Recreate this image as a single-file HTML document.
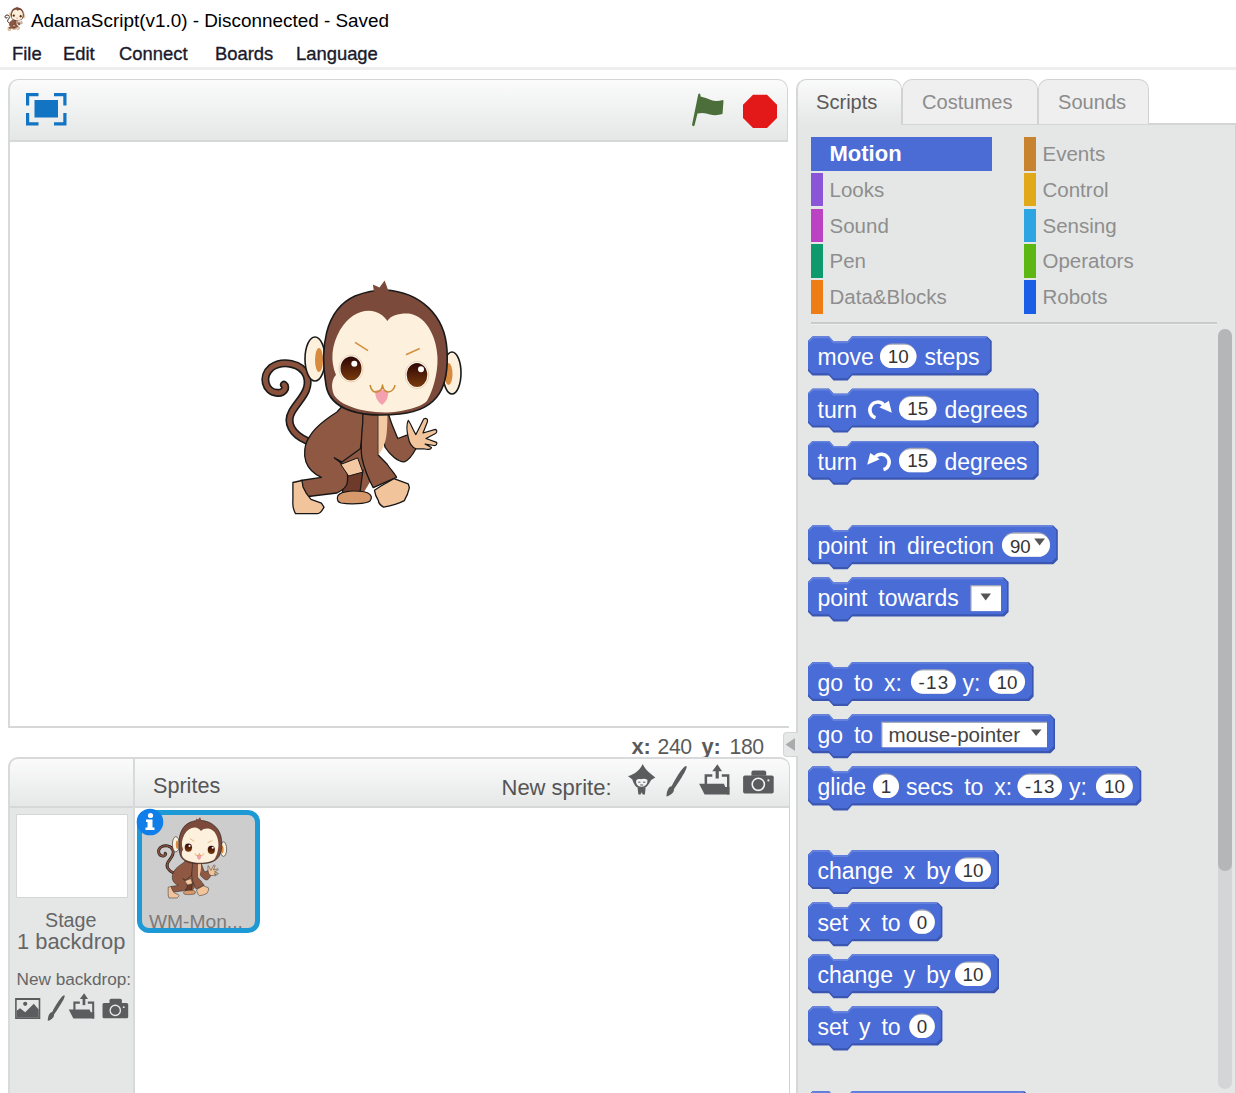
<!DOCTYPE html>
<html><head><meta charset="utf-8"><style>
*{box-sizing:border-box;margin:0;padding:0}
html,body{width:1236px;height:1093px;overflow:hidden;background:#fff;position:relative;font-family:"Liberation Sans",sans-serif}
.a{position:absolute}
.t{position:absolute;white-space:pre;line-height:1}
#title{left:31px;top:11.5px;font-size:18.9px;color:#000}
.menu{top:45.3px;font-size:18.4px;color:#1a1a2a;-webkit-text-stroke:0.35px #1a1a2a}
#menuline{left:0;top:67px;width:1236px;height:3px;background:#eeeeee}
#stbar{left:8px;top:79px;width:780px;height:63px;border:1px solid #d3d5d6;border-left:2px solid #d7d9da;border-bottom:2px solid #d5d7d8;border-radius:10px 10px 0 0;background:linear-gradient(#fbfbfb,#e5e7e7)}
#stage{left:8px;top:142px;width:781px;height:586px;border-left:2px solid #d7d9da;border-bottom:2px solid #d5d7d8;background:#fff}
.tab{top:79px;height:45px;border:1px solid #d0d2d3;border-bottom:none;border-radius:10px 10px 0 0;background:#efefef}
.tabt{top:92px;font-size:20.1px;color:#8c8c8c}
#pane{left:796px;top:123px;width:440px;height:970px;background:#e5e7e6;border-left:2px solid #d5d7d8;border-top:2px solid #d3d5d6;border-right:1px solid #cfd1d2}
.cat{font-size:20.5px;color:#8e8e8e}
#spbar{left:8px;top:757px;width:782px;height:51px;border:2px solid #d7d9da;border-right:1px solid #d3d5d6;border-bottom:none;border-radius:10px 10px 0 0;background:linear-gradient(#fbfbfb,#e5e7e7)}
#spleft{left:8px;top:806px;width:127px;height:290px;background:#e5e7e6;border-left:2px solid #d7d9da;border-right:2px solid #d7d9da;border-top:2px solid #d5d7d8}
#spright{left:135px;top:806px;width:655px;height:290px;background:#fff;border-right:1px solid #d0d2d3;border-top:2px solid #d5d7d8}
.bt{position:absolute;white-space:pre;line-height:1;font-size:23px;color:#fff;word-spacing:4.5px}
.num{position:absolute;white-space:pre;line-height:1;font-size:18px;color:#333}
</style></head><body>
<svg width="0" height="0" style="position:absolute"><defs>
<linearGradient id="eyeg" x1="0" y1="0" x2="0" y2="1"><stop offset="0" stop-color="#2e0604"/><stop offset="1" stop-color="#7a3a0c"/></linearGradient>
<symbol id="monkey" viewBox="255 275 210 245">
<g transform="translate(250,350) scale(0.1618)" stroke-linejoin="round">
<path d="M350,560 C260,520 220,450 260,380 C300,310 380,250 350,160 C320,80 200,60 130,110 C70,160 90,260 170,265 C210,268 230,230 210,215" fill="none" stroke="#1a1a1a" stroke-width="50" stroke-linecap="round"/>
<path d="M350,560 C260,520 220,450 260,380 C300,310 380,250 350,160 C320,80 200,60 130,110 C70,160 90,260 170,265 C210,268 230,230 210,215" fill="none" stroke="#8a513d" stroke-width="30" stroke-linecap="round"/>
</g>
<g stroke-linejoin="round" stroke="#161616">
<path d="M338,462 L362,436 L370,482 L364,492 L343,495 Z" fill="#8e5843" stroke="none"/>
<path d="M345,474 L363,470 L360,492 L342,495 Z" fill="#6e3b2b" stroke-width="1.2"/>
<path d="M337.5,497 C338,492 350,490 362,491.5 C371,492.5 373,497 370,501 C366,504 350,504.5 341,503 C337.5,502 337,499.5 337.5,497 Z" fill="#d7996c" stroke-width="1.2"/>
<path d="M337,412 C326,419 315,427 310,436 C304,444 303.5,455 306,462 C308.5,469 314,474 321.4,477.3 L300.7,480.5 L304,497 L337,493 C343,490 347,486 347.3,482.5 C348,478 347.5,474 347.3,472.1 C346,467 342,463 334.4,457.9 L342,462 L360.3,448.8 C362,440 362.5,432 362.8,425.5 L381,406 L346,402 Z" fill="#8e5843" stroke-width="1.3"/>
<path d="M340.8,464.4 L357.7,457.9 L362.8,472.1 L348.6,476 Z" fill="#f3c9a3" stroke-width="1"/>
<path d="M380,408 L387,410 C392,426 395,432 397.8,438.5 L408.2,434.6 L415.9,448.8 C412,456 408,461 404.3,461.8 C398,462 390,455 384.9,447 L380,408 Z" fill="#8e5843" stroke-width="1.3"/>
<path d="M362.8,408 L378.4,408 L378.4,455.3 C381,458 385,462 387,464 C391,470 395,474 396.5,477.3 L373.2,487.7 C368,478 364,468 362,458 C360.5,450 361,440 362.8,422 Z" fill="#8e5843" stroke-width="1.3"/>
<path d="M378.4,412 L387.4,412 C387.5,430 386.5,438 384.9,442.4 C383,448 381,452 378.4,455.3 Z" fill="#f3c9a3" stroke="none"/>
<path d="M408.2,420.4 C410,422 413,430 415.9,434.6 L423.7,419.1 C426,417.5 428,419 427.5,421.5 L423,433 L435.3,429.4 C437,430 437.5,432 435.5,433.5 L426,438.5 L436.6,442.4 C437.5,444 436,446 434,445.5 L425,444 L431.5,447.5 C431,449.5 428,450 424,448.8 L415.9,448.8 C411,447 409,442 408.2,437.2 C407,432 406.5,424 408.2,420.4 Z" fill="#f2c49c" stroke-width="1.2"/>
<path d="M292.9,482.5 L302,480.5 L303,487 L306,492.8 L311,499.3 L321.4,503.2 L324,507.1 C322,511 319,513.6 317.5,513.6 L295.5,513.6 C293.5,510 292.5,505 292.9,500.6 Z" fill="#f2c49c" stroke-width="1.3"/>
<path d="M374.5,490.3 L381,486 L393.9,478.6 L408.2,483.8 L409.4,487.7 C408,494 406,498 404.3,500.6 C398,504 390,506 383.6,507.1 C380,505 378.5,503 378.4,500.6 C376,497 375,494 374.5,490.3 Z" fill="#f2c49c" stroke-width="1.3"/>
</g>
<g stroke-linejoin="round">
<ellipse cx="315" cy="359" rx="10" ry="22" fill="#fdf0dc" stroke="#1a1a1a" stroke-width="1.6"/>
<ellipse cx="319" cy="360" rx="4" ry="12" fill="#d88a3e"/>
<ellipse cx="452" cy="373" rx="9" ry="21" fill="#fdf0dc" stroke="#1a1a1a" stroke-width="1.6"/>
<ellipse cx="448.5" cy="374" rx="4" ry="11" fill="#d88a3e"/>
<path d="M385,290 C420,292 445,315 447,350 C449,385 440,410 400,414 C360,418 330,410 326,385 C320,350 324,310 355,296 C365,292 375,290 385,290 Z" fill="#7b4a3a" stroke="#1a1a1a" stroke-width="1.6"/>
<polygon points="372.9,284.6 379.5,287.5 384.6,280.5 388.5,291 374,292" fill="#7b4a3a"/>
<path d="M368.8,310.8 C378,311 384,316 387.3,321 C391,315 400,313 408.7,313.5 C428,316 437,340 437.5,357.5 C438,375 432,392 428,399 C425,407 400,412.5 385,412.5 C360,412 340,405 334,395 C330,385 333,378 336,375 C330,360 331.6,345 340,330 C348,317 358,311 368.8,310.8 Z" fill="#fdf0dc"/>
<ellipse cx="351" cy="368.5" rx="12" ry="13.5" fill="#fff" stroke="#e3c39a" stroke-width="0.8"/>
<ellipse cx="351" cy="368.5" rx="10.5" ry="12" fill="url(#eyeg)"/>
<circle cx="354.3" cy="363.7" r="3" fill="#fff"/>
<ellipse cx="417" cy="375" rx="11.8" ry="13.5" fill="#fff" stroke="#e3c39a" stroke-width="0.8"/>
<ellipse cx="417" cy="375" rx="10.3" ry="12" fill="url(#eyeg)"/>
<circle cx="421" cy="369.2" r="3" fill="#fff"/>
<path d="M355,342.4 L368,350.7 M405.9,354.8 L419.7,348.6" stroke="#d49040" stroke-width="1.6"/>
<path d="M375,391 Q381,388 388,391 Q389,400 382,405 Q375,400 375,391 Z" fill="#f5a0ae"/>
<path d="M370,385 Q372,393 377,392 Q382,391 382.5,385 Q383.5,392 388.5,392 Q394,391 395,385" fill="none" stroke="#c88a30" stroke-width="1.5"/>
</g>
</symbol></defs></svg>
<svg class="a" style="left:4.2px;top:5.7px" width="21.6" height="25.2" viewBox="255 275 210 245"><use href="#monkey" x="255" y="275" width="210" height="245"/></svg>
<div class="t" id="title">AdamaScript(v1.0) - Disconnected - Saved</div>
<div class="t menu" style="left:12px">File</div>
<div class="t menu" style="left:63px">Edit</div>
<div class="t menu" style="left:119px">Connect</div>
<div class="t menu" style="left:215px">Boards</div>
<div class="t menu" style="left:296px">Language</div>
<div class="a" id="menuline"></div>
<div class="a" id="stbar"></div>
<div class="a" id="stage"></div>
<svg class="a" style="left:255px;top:275px" width="210" height="245" viewBox="255 275 210 245"><use href="#monkey" x="255" y="275" width="210" height="245"/></svg>
<svg class="a" style="left:0;top:0" width="1236" height="150">
<g fill="#1274c2">
<rect x="34.5" y="100" width="23.5" height="17.5"/>
<path d="M26,93 h12.5 v3.2 h-9.3 v9.3 h-3.2z"/>
<path d="M66.5,93 h-12.5 v3.2 h9.3 v9.3 h3.2z"/>
<path d="M26,125.5 h12.5 v-3.2 h-9.3 v-9.3 h-3.2z"/>
<path d="M66.5,125.5 h-12.5 v-3.2 h9.3 v-9.3 h3.2z"/>
</g>
<path fill="#4b6e3b" d="M692,125 L698.2,94.5 Q699.5,92.5 700.5,95 L700.5,96.5 Q706,97.5 711,100 Q716,102 723,100 L723.5,101 L722.5,114 Q716,116 710,114.5 Q704,112 697.5,113.5 L694.5,125.5 Q693,127 692,125z"/>
<polygon fill="#e31919" points="753,94.7 767,94.7 777,104.7 777,118 767,128 753,128 743,118 743,104.7"/>
</svg>
<div class="a" id="pane"></div>
<div class="a tab" style="left:902px;width:136px"></div>
<div class="a tab" style="left:1038px;width:111px"></div>
<div class="a tab" style="left:796px;width:106px;height:46px;border-left:2px solid #d5d7d8;background:linear-gradient(#fafafa,#e5e7e6)"></div>
<div class="t tabt" style="left:816px;color:#5a5a5a">Scripts</div>
<div class="t tabt" style="left:922px">Costumes</div>
<div class="t tabt" style="left:1058px">Sounds</div>
<div class="a" style="left:811px;top:137px;width:181px;height:33.5px;background:#4a6cd4"></div>
<div class="t cat" style="left:829.5px;top:142.8px;color:#fff;font-weight:bold;font-size:22px">Motion</div>
<div class="a" style="left:811px;top:172.8px;width:12px;height:33.7px;background:#8a55d7"></div>
<div class="t cat" style="left:829.5px;top:179.8px">Looks</div>
<div class="a" style="left:811px;top:208.5px;width:12px;height:33.7px;background:#bb42c3"></div>
<div class="t cat" style="left:829.5px;top:215.5px">Sound</div>
<div class="a" style="left:811px;top:244.3px;width:12px;height:33.7px;background:#0e9a6c"></div>
<div class="t cat" style="left:829.5px;top:251.3px">Pen</div>
<div class="a" style="left:811px;top:280px;width:12px;height:33.7px;background:#ee7d16"></div>
<div class="t cat" style="left:829.5px;top:287px">Data&amp;Blocks</div>
<div class="a" style="left:1024px;top:137px;width:12px;height:33.7px;background:#c88330"></div>
<div class="t cat" style="left:1042.5px;top:144px">Events</div>
<div class="a" style="left:1024px;top:172.8px;width:12px;height:33.7px;background:#e1a91a"></div>
<div class="t cat" style="left:1042.5px;top:179.8px">Control</div>
<div class="a" style="left:1024px;top:208.5px;width:12px;height:33.7px;background:#2ca5e2"></div>
<div class="t cat" style="left:1042.5px;top:215.5px">Sensing</div>
<div class="a" style="left:1024px;top:244.3px;width:12px;height:33.7px;background:#5cb712"></div>
<div class="t cat" style="left:1042.5px;top:251.3px">Operators</div>
<div class="a" style="left:1024px;top:280px;width:12px;height:33.7px;background:#1a5de6"></div>
<div class="t cat" style="left:1042.5px;top:287px">Robots</div>
<div class="a" style="left:811px;top:322px;width:406px;height:2px;background:#c9cbcb"></div>
<div class="a" style="left:811px;top:324px;width:406px;height:1px;background:#eef0f0"></div>
<div class="a" style="left:1217.7px;top:328.5px;width:14.5px;height:760.5px;border-radius:7.5px;background:#d4d5d7"></div>
<div class="a" style="left:1217.7px;top:328.5px;width:14.5px;height:542.5px;border-radius:7.5px;background:#b4b6b8"></div>
<svg class="a" style="left:0;top:0" width="1236" height="1093"><path fill="#3a56b0" d="M808,341.1 L812.5,336.6 L829,336.6 L833.5,341.6 L847.6,341.6 L852.1,336.6 L987.2,336.6 L991.7,341.1 L991.7,370.90000000000003 L987.2,375.40000000000003 L852.1,375.40000000000003 L847.6,380.40000000000003 L833.5,380.40000000000003 L829,375.40000000000003 L812.5,375.40000000000003 L808,370.90000000000003 Z"/><path fill="#4a6cd7" d="M808,341.1 L812.5,336.6 L829,336.6 L833.5,341.6 L847.6,341.6 L852.1,336.6 L985.6,336.6 L990.1,341.1 L990.1,368.70000000000005 L985.6,373.20000000000005 L852.1,373.20000000000005 L847.6,378.20000000000005 L833.5,378.20000000000005 L829,373.20000000000005 L812.5,373.20000000000005 L808,368.70000000000005 Z"/><path fill="none" stroke="#6482de" stroke-width="1.6" d="M808.8,341.6 L812.8,337.40000000000003 L829,337.40000000000003 L833.5,342.40000000000003 L847.6,342.40000000000003 L852.1,337.40000000000003 L986.2,337.40000000000003"/><rect x="880" y="343.55" width="36.5" height="24.5" rx="12.25" fill="#a7abb8"/><rect x="880" y="344.85" width="36.5" height="23.2" rx="11.6" fill="#fff"/><path fill="#3a56b0" d="M808,393.3 L812.5,388.8 L829,388.8 L833.5,393.8 L847.6,393.8 L852.1,388.8 L1034.2,388.8 L1038.7,393.3 L1038.7,423.1 L1034.2,427.6 L852.1,427.6 L847.6,432.6 L833.5,432.6 L829,427.6 L812.5,427.6 L808,423.1 Z"/><path fill="#4a6cd7" d="M808,393.3 L812.5,388.8 L829,388.8 L833.5,393.8 L847.6,393.8 L852.1,388.8 L1032.6000000000001,388.8 L1037.1000000000001,393.3 L1037.1000000000001,420.9 L1032.6000000000001,425.4 L852.1,425.4 L847.6,430.4 L833.5,430.4 L829,425.4 L812.5,425.4 L808,420.9 Z"/><path fill="none" stroke="#6482de" stroke-width="1.6" d="M808.8,393.8 L812.8,389.6 L829,389.6 L833.5,394.6 L847.6,394.6 L852.1,389.6 L1033.2,389.6"/><rect x="899" y="395.75" width="37.5" height="24.5" rx="12.25" fill="#a7abb8"/><rect x="899" y="397.05" width="37.5" height="23.2" rx="11.6" fill="#fff"/><path fill="#3a56b0" d="M808,445.4 L812.5,440.9 L829,440.9 L833.5,445.9 L847.6,445.9 L852.1,440.9 L1034.2,440.9 L1038.7,445.4 L1038.7,475.2 L1034.2,479.7 L852.1,479.7 L847.6,484.7 L833.5,484.7 L829,479.7 L812.5,479.7 L808,475.2 Z"/><path fill="#4a6cd7" d="M808,445.4 L812.5,440.9 L829,440.9 L833.5,445.9 L847.6,445.9 L852.1,440.9 L1032.6000000000001,440.9 L1037.1000000000001,445.4 L1037.1000000000001,473.0 L1032.6000000000001,477.5 L852.1,477.5 L847.6,482.5 L833.5,482.5 L829,477.5 L812.5,477.5 L808,473.0 Z"/><path fill="none" stroke="#6482de" stroke-width="1.6" d="M808.8,445.9 L812.8,441.7 L829,441.7 L833.5,446.7 L847.6,446.7 L852.1,441.7 L1033.2,441.7"/><rect x="899" y="447.84999999999997" width="37.5" height="24.5" rx="12.25" fill="#a7abb8"/><rect x="899" y="449.15" width="37.5" height="23.2" rx="11.6" fill="#fff"/><path fill="#3a56b0" d="M808,529.9 L812.5,525.4 L829,525.4 L833.5,530.4 L847.6,530.4 L852.1,525.4 L1053.3,525.4 L1057.8,529.9 L1057.8,559.6999999999999 L1053.3,564.1999999999999 L852.1,564.1999999999999 L847.6,569.1999999999999 L833.5,569.1999999999999 L829,564.1999999999999 L812.5,564.1999999999999 L808,559.6999999999999 Z"/><path fill="#4a6cd7" d="M808,529.9 L812.5,525.4 L829,525.4 L833.5,530.4 L847.6,530.4 L852.1,525.4 L1051.7,525.4 L1056.2,529.9 L1056.2,557.5 L1051.7,562.0 L852.1,562.0 L847.6,567.0 L833.5,567.0 L829,562.0 L812.5,562.0 L808,557.5 Z"/><path fill="none" stroke="#6482de" stroke-width="1.6" d="M808.8,530.4 L812.8,526.1999999999999 L829,526.1999999999999 L833.5,531.1999999999999 L847.6,531.1999999999999 L852.1,526.1999999999999 L1052.3,526.1999999999999"/><rect x="1002" y="532.35" width="48" height="24.5" rx="12.25" fill="#a7abb8"/><rect x="1002" y="533.65" width="48" height="23.2" rx="11.6" fill="#fff"/><path fill="#3a56b0" d="M808,582.1 L812.5,577.6 L829,577.6 L833.5,582.6 L847.6,582.6 L852.1,577.6 L1004.1,577.6 L1008.6,582.1 L1008.6,611.9 L1004.1,616.4 L852.1,616.4 L847.6,621.4 L833.5,621.4 L829,616.4 L812.5,616.4 L808,611.9 Z"/><path fill="#4a6cd7" d="M808,582.1 L812.5,577.6 L829,577.6 L833.5,582.6 L847.6,582.6 L852.1,577.6 L1002.5,577.6 L1007.0,582.1 L1007.0,609.7 L1002.5,614.2 L852.1,614.2 L847.6,619.2 L833.5,619.2 L829,614.2 L812.5,614.2 L808,609.7 Z"/><path fill="none" stroke="#6482de" stroke-width="1.6" d="M808.8,582.6 L812.8,578.4 L829,578.4 L833.5,583.4 L847.6,583.4 L852.1,578.4 L1003.1,578.4"/><path fill="#3a56b0" d="M808,666.7 L812.5,662.2 L829,662.2 L833.5,667.2 L847.6,667.2 L852.1,662.2 L1029.1,662.2 L1033.6,666.7 L1033.6,696.5 L1029.1,701.0 L852.1,701.0 L847.6,706.0 L833.5,706.0 L829,701.0 L812.5,701.0 L808,696.5 Z"/><path fill="#4a6cd7" d="M808,666.7 L812.5,662.2 L829,662.2 L833.5,667.2 L847.6,667.2 L852.1,662.2 L1027.5,662.2 L1032.0,666.7 L1032.0,694.3000000000001 L1027.5,698.8000000000001 L852.1,698.8000000000001 L847.6,703.8000000000001 L833.5,703.8000000000001 L829,698.8000000000001 L812.5,698.8000000000001 L808,694.3000000000001 Z"/><path fill="none" stroke="#6482de" stroke-width="1.6" d="M808.8,667.2 L812.8,663.0 L829,663.0 L833.5,668.0 L847.6,668.0 L852.1,663.0 L1028.1,663.0"/><rect x="911" y="669.1500000000001" width="44.799999999999955" height="24.5" rx="12.25" fill="#a7abb8"/><rect x="911" y="670.45" width="44.799999999999955" height="23.2" rx="11.6" fill="#fff"/><rect x="989" y="669.1500000000001" width="36" height="24.5" rx="12.25" fill="#a7abb8"/><rect x="989" y="670.45" width="36" height="23.2" rx="11.6" fill="#fff"/><path fill="#3a56b0" d="M808,718.9 L812.5,714.4 L829,714.4 L833.5,719.4 L847.6,719.4 L852.1,714.4 L1050.5,714.4 L1055,718.9 L1055,748.6999999999999 L1050.5,753.1999999999999 L852.1,753.1999999999999 L847.6,758.1999999999999 L833.5,758.1999999999999 L829,753.1999999999999 L812.5,753.1999999999999 L808,748.6999999999999 Z"/><path fill="#4a6cd7" d="M808,718.9 L812.5,714.4 L829,714.4 L833.5,719.4 L847.6,719.4 L852.1,714.4 L1048.9,714.4 L1053.4,718.9 L1053.4,746.5 L1048.9,751.0 L852.1,751.0 L847.6,756.0 L833.5,756.0 L829,751.0 L812.5,751.0 L808,746.5 Z"/><path fill="none" stroke="#6482de" stroke-width="1.6" d="M808.8,719.4 L812.8,715.1999999999999 L829,715.1999999999999 L833.5,720.1999999999999 L847.6,720.1999999999999 L852.1,715.1999999999999 L1049.5,715.1999999999999"/><path fill="#3a56b0" d="M808,771.1 L812.5,766.6 L829,766.6 L833.5,771.6 L847.6,771.6 L852.1,766.6 L1136.8,766.6 L1141.3,771.1 L1141.3,800.9 L1136.8,805.4 L852.1,805.4 L847.6,810.4 L833.5,810.4 L829,805.4 L812.5,805.4 L808,800.9 Z"/><path fill="#4a6cd7" d="M808,771.1 L812.5,766.6 L829,766.6 L833.5,771.6 L847.6,771.6 L852.1,766.6 L1135.2,766.6 L1139.7,771.1 L1139.7,798.7 L1135.2,803.2 L852.1,803.2 L847.6,808.2 L833.5,808.2 L829,803.2 L812.5,803.2 L808,798.7 Z"/><path fill="none" stroke="#6482de" stroke-width="1.6" d="M808.8,771.6 L812.8,767.4 L829,767.4 L833.5,772.4 L847.6,772.4 L852.1,767.4 L1135.8,767.4"/><rect x="873" y="773.5500000000001" width="26" height="24.5" rx="12.25" fill="#a7abb8"/><rect x="873" y="774.85" width="26" height="23.2" rx="11.6" fill="#fff"/><rect x="1017.5" y="773.5500000000001" width="44.5" height="24.5" rx="12.25" fill="#a7abb8"/><rect x="1017.5" y="774.85" width="44.5" height="23.2" rx="11.6" fill="#fff"/><rect x="1096" y="773.5500000000001" width="36.799999999999955" height="24.5" rx="12.25" fill="#a7abb8"/><rect x="1096" y="774.85" width="36.799999999999955" height="23.2" rx="11.6" fill="#fff"/><path fill="#3a56b0" d="M808,854.8 L812.5,850.3 L829,850.3 L833.5,855.3 L847.6,855.3 L852.1,850.3 L994.5,850.3 L999,854.8 L999,884.5999999999999 L994.5,889.0999999999999 L852.1,889.0999999999999 L847.6,894.0999999999999 L833.5,894.0999999999999 L829,889.0999999999999 L812.5,889.0999999999999 L808,884.5999999999999 Z"/><path fill="#4a6cd7" d="M808,854.8 L812.5,850.3 L829,850.3 L833.5,855.3 L847.6,855.3 L852.1,850.3 L992.9,850.3 L997.4,854.8 L997.4,882.4 L992.9,886.9 L852.1,886.9 L847.6,891.9 L833.5,891.9 L829,886.9 L812.5,886.9 L808,882.4 Z"/><path fill="none" stroke="#6482de" stroke-width="1.6" d="M808.8,855.3 L812.8,851.0999999999999 L829,851.0999999999999 L833.5,856.0999999999999 L847.6,856.0999999999999 L852.1,851.0999999999999 L993.5,851.0999999999999"/><rect x="955" y="857.25" width="36" height="24.5" rx="12.25" fill="#a7abb8"/><rect x="955" y="858.55" width="36" height="23.2" rx="11.6" fill="#fff"/><path fill="#3a56b0" d="M808,906.9 L812.5,902.4 L829,902.4 L833.5,907.4 L847.6,907.4 L852.1,902.4 L937.9,902.4 L942.4,906.9 L942.4,936.6999999999999 L937.9,941.1999999999999 L852.1,941.1999999999999 L847.6,946.1999999999999 L833.5,946.1999999999999 L829,941.1999999999999 L812.5,941.1999999999999 L808,936.6999999999999 Z"/><path fill="#4a6cd7" d="M808,906.9 L812.5,902.4 L829,902.4 L833.5,907.4 L847.6,907.4 L852.1,902.4 L936.3,902.4 L940.8,906.9 L940.8,934.5 L936.3,939.0 L852.1,939.0 L847.6,944.0 L833.5,944.0 L829,939.0 L812.5,939.0 L808,934.5 Z"/><path fill="none" stroke="#6482de" stroke-width="1.6" d="M808.8,907.4 L812.8,903.1999999999999 L829,903.1999999999999 L833.5,908.1999999999999 L847.6,908.1999999999999 L852.1,903.1999999999999 L936.9,903.1999999999999"/><rect x="909.3" y="909.35" width="25.5" height="24.5" rx="12.25" fill="#a7abb8"/><rect x="909.3" y="910.65" width="25.5" height="23.2" rx="11.6" fill="#fff"/><path fill="#3a56b0" d="M808,959.0 L812.5,954.5 L829,954.5 L833.5,959.5 L847.6,959.5 L852.1,954.5 L994.5,954.5 L999,959.0 L999,988.8 L994.5,993.3 L852.1,993.3 L847.6,998.3 L833.5,998.3 L829,993.3 L812.5,993.3 L808,988.8 Z"/><path fill="#4a6cd7" d="M808,959.0 L812.5,954.5 L829,954.5 L833.5,959.5 L847.6,959.5 L852.1,954.5 L992.9,954.5 L997.4,959.0 L997.4,986.6 L992.9,991.1 L852.1,991.1 L847.6,996.1 L833.5,996.1 L829,991.1 L812.5,991.1 L808,986.6 Z"/><path fill="none" stroke="#6482de" stroke-width="1.6" d="M808.8,959.5 L812.8,955.3 L829,955.3 L833.5,960.3 L847.6,960.3 L852.1,955.3 L993.5,955.3"/><rect x="955" y="961.45" width="36" height="24.5" rx="12.25" fill="#a7abb8"/><rect x="955" y="962.75" width="36" height="23.2" rx="11.6" fill="#fff"/><path fill="#3a56b0" d="M808,1011.1 L812.5,1006.6 L829,1006.6 L833.5,1011.6 L847.6,1011.6 L852.1,1006.6 L937.9,1006.6 L942.4,1011.1 L942.4,1040.9 L937.9,1045.4 L852.1,1045.4 L847.6,1050.4 L833.5,1050.4 L829,1045.4 L812.5,1045.4 L808,1040.9 Z"/><path fill="#4a6cd7" d="M808,1011.1 L812.5,1006.6 L829,1006.6 L833.5,1011.6 L847.6,1011.6 L852.1,1006.6 L936.3,1006.6 L940.8,1011.1 L940.8,1038.7 L936.3,1043.2 L852.1,1043.2 L847.6,1048.2 L833.5,1048.2 L829,1043.2 L812.5,1043.2 L808,1038.7 Z"/><path fill="none" stroke="#6482de" stroke-width="1.6" d="M808.8,1011.6 L812.8,1007.4 L829,1007.4 L833.5,1012.4 L847.6,1012.4 L852.1,1007.4 L936.9,1007.4"/><rect x="909.3" y="1013.55" width="25.5" height="24.5" rx="12.25" fill="#a7abb8"/><rect x="909.3" y="1014.8499999999999" width="25.5" height="23.2" rx="11.6" fill="#fff"/><path fill="#3a56b0" d="M808,1095.8 L812.5,1091.3 L829,1091.3 L833.5,1096.3 L847.6,1096.3 L852.1,1091.3 L1024.5,1091.3 L1029,1095.8 L1029,1125.6 L1024.5,1130.1 L852.1,1130.1 L847.6,1135.1 L833.5,1135.1 L829,1130.1 L812.5,1130.1 L808,1125.6 Z"/><path fill="#4a6cd7" d="M808,1095.8 L812.5,1091.3 L829,1091.3 L833.5,1096.3 L847.6,1096.3 L852.1,1091.3 L1022.9,1091.3 L1027.4,1095.8 L1027.4,1123.3999999999999 L1022.9,1127.8999999999999 L852.1,1127.8999999999999 L847.6,1132.8999999999999 L833.5,1132.8999999999999 L829,1127.8999999999999 L812.5,1127.8999999999999 L808,1123.3999999999999 Z"/><path fill="none" stroke="#6482de" stroke-width="1.6" d="M808.8,1096.3 L812.8,1092.1 L829,1092.1 L833.5,1097.1 L847.6,1097.1 L852.1,1092.1 L1023.5,1092.1"/><polygon fill="#555" points="1034.2,538.6 1045,538.6 1039.6,545.4"/><rect x="970.4" y="585.1" width="30.6" height="26" fill="#a9adb9"/><rect x="971.6" y="586.4" width="29.4" height="24.7" fill="#fff"/><polygon fill="#555" points="980.5,593.6 991,593.6 985.7,600.6"/><rect x="881.3" y="721.6999999999999" width="165.7" height="25.5" fill="#a9adb9"/><rect x="882.5" y="723.0" width="164.5" height="24.2" fill="#fff"/><polygon fill="#555" points="1031,729.4 1041.5,729.4 1036.2,735.9"/><path d="M875.52,417.59 A7.9,7.9 0 1 1 883.57,404.71" fill="none" stroke="#fff" stroke-width="3.5"/><polygon fill="#fff" points="879.3,407.2 888.8,400.8 891.8,412.7"/><g transform="translate(1759,0) scale(-1,1)"><path d="M875.52,469.69 A7.9,7.9 0 1 1 883.57,456.81" fill="none" stroke="#fff" stroke-width="3.5"/><polygon fill="#fff" points="879.3,459.29999999999995 888.8,452.9 891.8,464.79999999999995"/></g></svg>
<div class="bt" style="left:817.5px;top:346.40000000000003px">move</div><div class="num" style="left:880px;width:36.5px;text-align:center;top:347.90000000000003px;font-size:18.8px">10</div><div class="bt" style="left:924.5px;top:346.40000000000003px">steps</div><div class="bt" style="left:817.5px;top:398.6px">turn</div><div class="num" style="left:899px;width:37.5px;text-align:center;top:400.1px;font-size:18.8px">15</div><div class="bt" style="left:944.5px;top:398.6px">degrees</div><div class="bt" style="left:817.5px;top:450.7px">turn</div><div class="num" style="left:899px;width:37.5px;text-align:center;top:452.2px;font-size:18.8px">15</div><div class="bt" style="left:944.5px;top:450.7px">degrees</div><div class="bt" style="left:817.5px;top:535.1999999999999px">point in direction</div><div class="bt" style="left:817.5px;top:587.4px">point towards</div><div class="bt" style="left:817.5px;top:672.0px">go to x:</div><div class="num" style="left:911px;width:44.799999999999955px;text-align:center;top:673.5000000000001px;font-size:18.8px;letter-spacing:1.2px;text-indent:1.2px">-13</div><div class="bt" style="left:962.5px;top:672.0px">y:</div><div class="num" style="left:989px;width:36px;text-align:center;top:673.5000000000001px;font-size:18.8px">10</div><div class="bt" style="left:817.5px;top:724.1999999999999px">go to</div><div class="bt" style="left:817.5px;top:776.4px">glide</div><div class="num" style="left:873px;width:26px;text-align:center;top:777.9000000000001px;font-size:18.8px">1</div><div class="bt" style="left:906px;top:776.4px">secs to x:</div><div class="num" style="left:1017.5px;width:44.5px;text-align:center;top:777.9000000000001px;font-size:18.8px;letter-spacing:1.2px;text-indent:1.2px">-13</div><div class="bt" style="left:1069px;top:776.4px">y:</div><div class="num" style="left:1096px;width:36.799999999999955px;text-align:center;top:777.9000000000001px;font-size:18.8px">10</div><div class="bt" style="left:817.5px;top:860.0999999999999px">change x by</div><div class="num" style="left:955px;width:36px;text-align:center;top:861.6px;font-size:18.8px">10</div><div class="bt" style="left:817.5px;top:912.1999999999999px">set x to</div><div class="num" style="left:909.3px;width:25.5px;text-align:center;top:913.7px;font-size:18.8px">0</div><div class="bt" style="left:817.5px;top:964.3px">change y by</div><div class="num" style="left:955px;width:36px;text-align:center;top:965.8000000000001px;font-size:18.8px">10</div><div class="bt" style="left:817.5px;top:1016.4px">set y to</div><div class="num" style="left:909.3px;width:25.5px;text-align:center;top:1017.9px;font-size:18.8px">0</div><div class="num" style="left:1010px;top:537.6999999999999px;font-size:18.6px">90</div><div class="num" style="left:888.5px;top:725.0px;font-size:20.6px;color:#444">mouse-pointer</div>
<div class="t" style="left:631.5px;top:735.8px;font-size:21.8px;color:#5a5a5a;font-weight:bold">x:</div>
<div class="t" style="left:657.5px;top:736.4px;font-size:21.2px;letter-spacing:-0.35px;color:#5a5a5a">240</div>
<div class="t" style="left:701.5px;top:735.8px;font-size:21.8px;color:#5a5a5a;font-weight:bold">y:</div>
<div class="t" style="left:729.5px;top:736.4px;font-size:21.2px;letter-spacing:-0.35px;color:#5a5a5a">180</div>
<div class="a" style="left:782.5px;top:732px;width:15px;height:24.5px;background:#e6e8e8;border:1px solid #d3d5d6;border-right:none;border-radius:4px 0 0 4px"></div>
<svg class="a" style="left:0;top:0" width="800" height="800"><polygon fill="#a9abad" points="785.6,744.5 795,738 795,751"/></svg>
<div class="a" id="spbar"></div>
<div class="a" id="spleft"></div>
<div class="a" id="spright"></div>
<div class="a" style="left:133px;top:759px;width:2px;height:48px;background:#d7d9da"></div>
<div class="t" style="left:153px;top:775px;font-size:21.6px;color:#555">Sprites</div>
<div class="t" style="left:501.5px;top:777px;font-size:22px;color:#555">New sprite:</div>
<div class="a" style="left:15.5px;top:813.5px;width:112px;height:84.5px;background:#fff;border:1px solid #d5d6d7"></div>
<div class="t" style="left:45px;top:911px;font-size:19.7px;color:#666">Stage</div>
<div class="t" style="left:17px;top:930.5px;font-size:21.9px;color:#666">1 backdrop</div>
<div class="t" style="left:16.5px;top:970.5px;font-size:17.2px;color:#666">New backdrop:</div>
<svg class="a" style="left:0;top:0" width="800" height="1093"><g>
<path fill="#5b5c5e" d="M642.7,764.1 C641,768 638,771 635.1,772.9 C632.5,774.5 630,775.5 627.8,776.1 C629.5,777.5 631,778.5 632.3,779.4 C633,781.5 633.8,783.5 634.9,785.2 C636.5,787.3 639,788.4 641.4,788.4 C644,788.4 646.5,787.3 647.8,785.2 C649.3,783.5 650.3,781.5 651.1,780 C652.5,779 654,778.2 655.3,777.4 C653.5,776 652,775 650.4,773.5 C647,771 644.5,768 642.7,764.1 Z"/>
<path fill="#f4f4f4" d="M636.3,780.2 C637.5,778.9 639.5,778.5 641,779.3 C642.5,778.5 645.5,778.6 647.3,779.8 C647.8,782.5 647,786.2 641.6,786.8 C636.5,786.4 635.6,782.8 636.3,780.2 Z"/>
<path fill="#5b5c5e" d="M637.6,788 H645.6 L644.9,794.6 H642.7 L641.7,792.3 L640.6,794.6 H638.4 Z"/>
<path d="M638.2,782.2 h2.3 M643,782.2 h2.3 M640.2,785 h3" stroke="#5b5c5e" stroke-width="1"/>
</g><g fill="#5b5c5e">
<path d="M686.3,766 C687.8,767.2 684.5,773.5 673.8,789.3 L670.8,787.8 C678.5,772.5 683.8,766.2 686.3,766 Z"/>
<path d="M671.2,786.3 C674,787.3 674.6,790 673.2,792.2 C671.6,794.6 668.5,796 666.5,796.6 C666.4,794 667,791 668.4,788.6 C669.2,787.3 670,786.3 671.2,786.3 Z"/>
</g><g fill="#5b5c5e">
<polygon points="717.4,764.2 712.3,771.3 722,771.3"/>
<rect x="715.6" y="770.5" width="3.2" height="8"/>
<path d="M704.6,784.5 V774.2 H712.3 V776.7 H707.1 V784.5 Z"/>
<path d="M721.8,774.2 H729.4 V794.5 H727 V776.7 H721.8 Z"/>
<polygon points="699.1,783.8 723.9,783.8 725.3,786.9 729.4,786.9 729.4,794.5 704.6,794.5"/>
</g><g>
<rect x="743.1" y="775.5" width="30.6" height="18" rx="1.8" fill="#5b5c5e"/>
<path d="M751.4,775.8 V772.4 Q751.4,770.4 753.4,770.4 H764.2 Q766.2,770.4 766.2,772.4 V775.8 Z" fill="#5b5c5e"/>
<circle cx="758.3" cy="784.3" r="6.1" fill="none" stroke="#f2f2f2" stroke-width="1.6"/>
<circle cx="768.4" cy="780.4" r="1.1" fill="#e8e8e8"/>
</g><g fill="#5b5c5e">
<path fill-rule="evenodd" d="M15.1,998.1 H40.3 V1018.9 H15.1 Z M16.7,1000.1 V1017.3 H38.7 V1000.1 Z"/>
<polygon points="16.7,1010.8 20.1,1008.3 25.2,1012.3 33.8,1003.7 38.7,1009.5 38.7,1017.3 16.7,1017.3"/>
<circle cx="25.2" cy="1003.8" r="2.1"/>
</g><g transform="translate(-512.1,351.7) scale(0.84)"><g fill="#5b5c5e">
<path d="M686.3,766 C687.8,767.2 684.5,773.5 673.8,789.3 L670.8,787.8 C678.5,772.5 683.8,766.2 686.3,766 Z"/>
<path d="M671.2,786.3 C674,787.3 674.6,790 673.2,792.2 C671.6,794.6 668.5,796 666.5,796.6 C666.4,794 667,791 668.4,788.6 C669.2,787.3 670,786.3 671.2,786.3 Z"/>
</g></g><g transform="translate(-518.5,351.2) scale(0.84)"><g fill="#5b5c5e">
<polygon points="717.4,764.2 712.3,771.3 722,771.3"/>
<rect x="715.6" y="770.5" width="3.2" height="8"/>
<path d="M704.6,784.5 V774.2 H712.3 V776.7 H707.1 V784.5 Z"/>
<path d="M721.8,774.2 H729.4 V794.5 H727 V776.7 H721.8 Z"/>
<polygon points="699.1,783.8 723.9,783.8 725.3,786.9 729.4,786.9 729.4,794.5 704.6,794.5"/>
</g></g><g transform="translate(-521.7,351.6) scale(0.84)"><g>
<rect x="743.1" y="775.5" width="30.6" height="18" rx="1.8" fill="#5b5c5e"/>
<path d="M751.4,775.8 V772.4 Q751.4,770.4 753.4,770.4 H764.2 Q766.2,770.4 766.2,772.4 V775.8 Z" fill="#5b5c5e"/>
<circle cx="758.3" cy="784.3" r="6.1" fill="none" stroke="#e8e9e9" stroke-width="1.6"/>
<circle cx="768.4" cy="780.4" r="1.1" fill="#e8e8e8"/>
</g></g></svg>
<div class="a" style="left:136.5px;top:809.5px;width:123.5px;height:123px;border:5px solid #1d9ad6;border-radius:12px;background:#cdcdcd;overflow:hidden"><div class="t" style="left:7.5px;top:97.5px;font-size:19.2px;color:#7a7a7a">WM-Mon...</div></div>
<svg class="a" style="left:155.4px;top:814.9px" width="73" height="85.3" viewBox="255 275 210 245"><use href="#monkey" x="255" y="275" width="210" height="245"/></svg>
<svg class="a" style="left:0;top:0" width="300" height="900"><circle cx="150" cy="822" r="13.3" fill="#0f7ee8"/><circle cx="150.5" cy="815.5" r="2.6" fill="#fff"/><path fill="#fff" d="M146,819.5 h6.5 v8 h2 v2.5 h-9 v-2.5 h2 v-5.5 h-1.5z"/></svg>
</body></html>
